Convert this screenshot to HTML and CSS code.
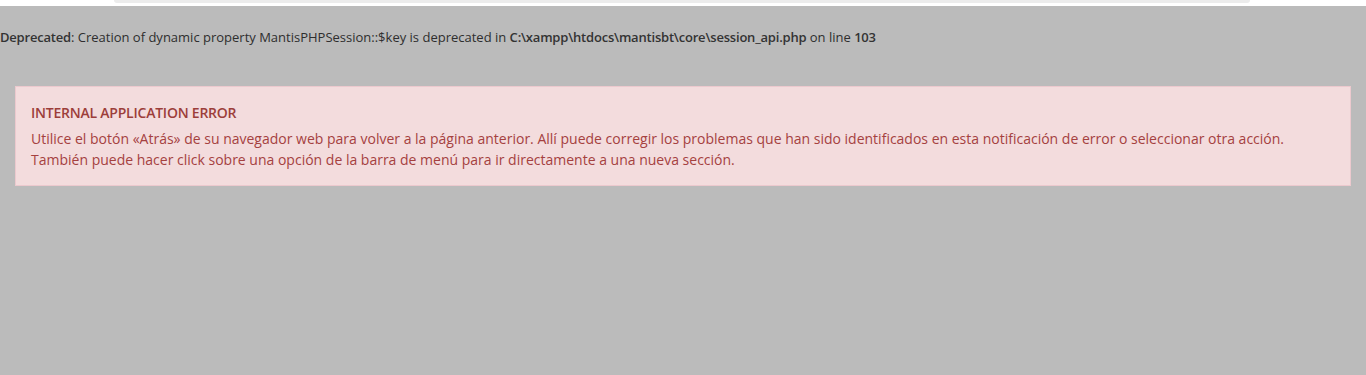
FILE: index.html
```html
<!DOCTYPE html>
<html lang="es">
<head>
<meta charset="utf-8">
<title>MantisBT</title>
<link rel="stylesheet" href="styles.css">
</head>
<body>
<div class="topstrip"><div class="topbar"></div></div>
<div class="page">
  <p class="deprecated"><b>Deprecated</b>: Creation of dynamic property MantisPHPSession::$key is deprecated in <b>C:\xampp\htdocs\mantisbt\core\session_api.php</b> on line <b>103</b></p>
  <div class="alert">
    <p class="alert-title">INTERNAL APPLICATION ERROR</p>
    <p class="alert-text">Utilice el botón «Atrás» de su navegador web para volver a la página anterior. Allí puede corregir los problemas que han sido identificados en esta notificación de error o seleccionar otra acción.<br>También puede hacer click sobre una opción de la barra de menú para ir directamente a una nueva sección.</p>
  </div>
</div>
</body>
</html>
```
FILE: styles.css
```css
html, body {
  margin: 0;
  padding: 0;
  height: 100%;
}
body {
  background: #bbbbbb;
  font-family: "Open Sans", "Noto Sans", sans-serif;
  color: #2e2e2e;
}
.topstrip {
  background: #ffffff;
  height: 6px;
  padding: 0 116px 0 114px;
}
.topbar {
  height: 3px;
  background: #ececec;
  border-radius: 0 0 4px 4px;
}
.page {
  padding: 0 15px;
}
.deprecated {
  margin: 0 -15px;
  padding: 21px 0 0;
  font-size: 13px;
  line-height: 20px;
  height: 59px;
  box-sizing: border-box;
}
.deprecated b {
  font-weight: 600;
  letter-spacing: -0.2px;
  color: #333333;
}
.alert {
  margin-top: 21px;
  background: #f3dcdd;
  border: 1px solid #ecc9ce;
  padding: 16px 15px 15px;
  color: #a5413f;
}
.alert-title {
  margin: 0 0 5px;
  font-size: 14px;
  font-weight: 600;
  letter-spacing: -0.23px;
  line-height: 20px;
  color: #9c3e3a;
}
.alert-text {
  margin: 0;
  font-size: 14px;
  line-height: 21px;
}
```
